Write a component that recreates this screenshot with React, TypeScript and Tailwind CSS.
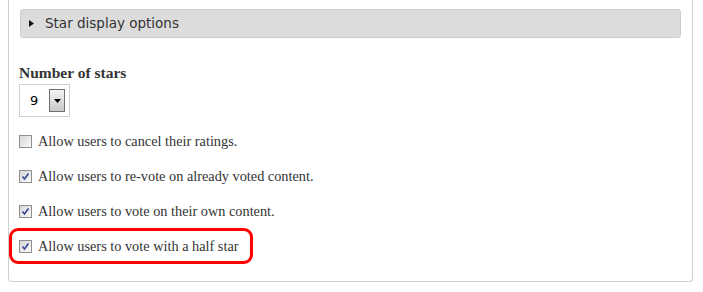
import React from 'react';

type Option = {
  label: string;
  checked: boolean;
};

const options: Option[] = [
  { label: 'Allow users to cancel their ratings.', checked: false },
  { label: 'Allow users to re-vote on already voted content.', checked: true },
  { label: 'Allow users to vote on their own content.', checked: true },
  { label: 'Allow users to vote with a half star', checked: true },
];

const Checkbox = ({ checked }: { checked: boolean }) => (
  <span className="flex h-[13px] w-[13px] shrink-0 items-center justify-center border border-[#8f8f8f] bg-gradient-to-br from-[#d6d6d6] to-[#fbfbfb]">
    {checked && (
      <svg width="9" height="9" viewBox="0 0 9 9">
        <path d="M1.5 4.5 L3.5 7 L7.5 1.5" fill="none" stroke="#34479a" strokeWidth="1.6" />
      </svg>
    )}
  </span>
);

const App = () => {
  return (
    <div className="h-[292px] w-[703px] bg-white pl-2 pr-[10px]">
      <div className="h-[282px] rounded-b-[4px] border-x border-b border-[#cfcfcf] pl-[10px] pr-[11px] pt-[9px]">
        <div className="ml-[1px] flex h-[29px] items-center rounded-[3px] border border-[#cdcdcd] bg-[#dcdcdc] pl-[8px] font-['DejaVu_Sans',sans-serif] text-[13.5px] text-[#333]">
          <svg width="5" height="7" viewBox="0 0 5 7" className="mr-[11px]">
            <path d="M0 0 L5 3.5 L0 7 Z" fill="#111" />
          </svg>
          Star display options
        </div>

        <div className="mt-[26px] font-['Liberation_Serif',serif] text-[#333]">
          <label className="block text-[15.5px] font-bold leading-[18px] text-[#333]">Number of stars</label>
          <div className="mt-[2px] flex h-[33px] w-[51px] items-center border border-[#cfcfcf] pl-[10px] pr-[4px]">
            <span className="font-['DejaVu_Sans',sans-serif] text-[13px] text-black">9</span>
            <span className="ml-auto flex h-[23px] w-[16px] items-center justify-center border border-[#707070] bg-gradient-to-b from-[#f4f4f4] to-[#c9c9c9]">
              <svg width="7" height="4" viewBox="0 0 7 4">
                <path d="M0 0 L7 0 L3.5 4 Z" fill="#000" />
              </svg>
            </span>
          </div>

          <div className="mt-[18px] flex flex-col gap-[22px]">
            {options.map((option, i) => {
              const row = (
                <div className="flex h-[13px] items-center gap-[6px]">
                  <Checkbox checked={option.checked} />
                  <span className="whitespace-nowrap text-[14.3px] leading-[13px] text-[#333]">{option.label}</span>
                </div>
              );
              if (i === options.length - 1) {
                return (
                  <div key={option.label} className="relative">
                    {row}
                    <div className="absolute left-[-10px] top-[-12px] h-[36px] w-[244px] rounded-[9px] border-[3px] border-[#ff0000]" />
                  </div>
                );
              }
              return <div key={option.label}>{row}</div>;
            })}
          </div>
        </div>
      </div>
    </div>
  );
};

export default App;
